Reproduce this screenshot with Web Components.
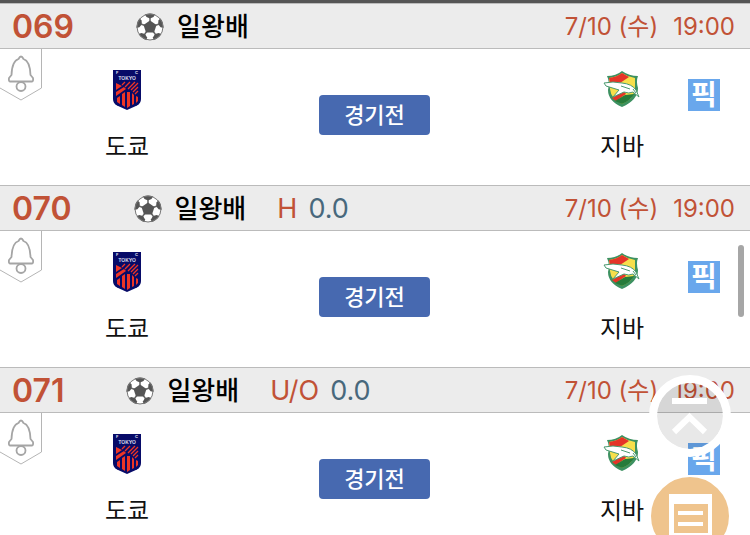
<!DOCTYPE html>
<html lang="ko">
<head>
<meta charset="utf-8">
<meta name="viewport" content="width=device-width, initial-scale=1">
<title>일왕배</title>
<style>
    body {
        margin: 0;
        background: #fff;
        color: #111;
        font-family: Inter, "Noto Sans CJK KR", sans-serif;
        overflow: hidden;
    }
</style>
</head>
<body>
<match-list>
    <match-row number="069" league="일왕배" date="7/10 (수)" time="19:00">
        <team-badge slot="home" crest="tokyo">도쿄</team-badge>
        <team-badge slot="away" crest="chiba">지바</team-badge>
    </match-row>
    <match-row number="070" league="일왕배" type="H" line="0.0" date="7/10 (수)" time="19:00">
        <team-badge slot="home" crest="tokyo">도쿄</team-badge>
        <team-badge slot="away" crest="chiba">지바</team-badge>
    </match-row>
    <match-row number="071" league="일왕배" type="U/O" line="0.0" date="7/10 (수)" time="19:00">
        <team-badge slot="home" crest="tokyo">도쿄</team-badge>
        <team-badge slot="away" crest="chiba">지바</team-badge>
    </match-row>
</match-list>
<scroll-thumb></scroll-thumb>
<floating-actions></floating-actions>

<script>
const crests = {
    tokyo: `
        <svg width="40" height="40" viewBox="0 0 40 40" aria-hidden="true">
            <path d="M6 0H34V29Q34 33 30 35.500L20 40L10 35.500Q6 33 6 29Z" fill="#070b68"/>
            <g fill="#e6e7f5" font-family="Inter, sans-serif" font-weight="600">
                <text x="9" y="4" font-size="4">F</text>
                <text x="28" y="4" font-size="4">C</text>
                <text x="20" y="10" font-size="5" text-anchor="middle">TOKYO</text>
            </g>
            <g fill="#ee3526">
                <path d="M9 13L15 16L9 20Z"/>
                <path d="M9 22L17 17L19 19L9 26Z"/>
                <path d="M10 28L13 26V34L10 32Z"/>
                <path d="M15 24L18 22V37L15 35Z"/>
                <path d="M20 22H23V36L20 38Z"/>
                <path d="M25 23L27 25V34L25 35Z"/>
                <path d="M29 26L31 27V31L29 33Z"/>
            </g>
            <path d="M15 15L18 12M18 17L23 12M21 19L28 12M24 20L31 13M26 22L31 17M28 24L31 21" stroke="#ee3526" stroke-width="1.300"/>
        </svg>`,
    chiba: `
        <svg width="40" height="40" viewBox="0 0 40 40" aria-hidden="true">
            <path d="M5 6Q14 6 20 1Q27 6 36 6Q34 11 36 18Q36 30 20 37Q6 31 6 20Q8 12 5 6Z" fill="#3d9161"/>
            <path d="M7 8Q15 7 20 3Q26 7 33 8V18Q32 29 20 34Q9 29 8 19Z" fill="#f7df4b"/>
            <path d="M7 8Q15 7 20 3L27 7L12 17L8 14Z" fill="#e53428"/>
            <path d="M10 28L22 21L24 24L14 31Z" fill="#e53428"/>
            <path d="M13 31L23 25L32 24Q28 31 20 34Z" fill="#267b3b"/>
            <path d="M2 13Q11 11 20 13Q30 14 34 20L37 27L31 22Q27 24 22 22L11 27L17 20L4 16Z" fill="#fff" stroke="#4a9a70" stroke-width="1"/>
            <path d="M19 16L28 19M31 19L34 23" stroke="#4a9a70" stroke-width="1"/>
        </svg>`
};

class MatchList extends HTMLElement {
    constructor() {
        super();
        this.attachShadow({ mode: 'open' });
        this.shadowRoot.innerHTML = `
        <style>
            :host {
                display: flex;
                flex-direction: column;
                border-top: 3px solid #555;
            }
        </style>
        <slot></slot>`;
    }
}

class TeamBadge extends HTMLElement {
    constructor() {
        super();
        this.attachShadow({ mode: 'open' });
    }

    connectedCallback() {
        this.shadowRoot.innerHTML = `
        <style>
            :host {
                display: flex;
                flex-direction: column;
                align-items: center;
                gap: 21px;
                font-size: 24px;
                line-height: 32px;
            }

            svg {
                display: block;
            }
        </style>
        ${crests[this.getAttribute('crest')]}
        <span><slot></slot></span>`;
    }
}

class SoccerBall extends HTMLElement {
    constructor() {
        super();
        this.attachShadow({ mode: 'open' });
        const spots = [0, 72, 144, 216, 288].map(angle => `
            <g transform="rotate(${angle} 14 14)">
                <path d="M8 0H20L17.500 4L14 5.500L10.500 4Z" fill="#555"/>
                <path d="M14 9V5" stroke="#666" stroke-width="1.500"/>
            </g>`).join('');
        this.shadowRoot.innerHTML = `
        <style>
            :host {
                display: block;
            }

            svg {
                display: block;
            }
        </style>
        <svg width="28" height="28" viewBox="0 0 28 28" aria-hidden="true">
            <defs><clipPath id="ball"><circle cx="14" cy="14" r="13.500"/></clipPath></defs>
            <circle cx="14" cy="14" r="13" fill="#fff"/>
            <g clip-path="url(#ball)">
                ${spots}
                <path d="M14 7.500L20.500 12L18 19.500H10L7.500 12Z" fill="#555"/>
            </g>
            <circle cx="14" cy="14" r="13" fill="none" stroke="#777" stroke-width="1"/>
        </svg>`;
    }
}

class MatchRow extends HTMLElement {
    constructor() {
        super();
        this.attachShadow({ mode: 'open' });
    }

    connectedCallback() {
        const type = this.getAttribute('type');
        this.shadowRoot.innerHTML = `
        <style>
            :host {
                display: block;
            }

            header {
                display: flex;
                align-items: center;
                box-sizing: border-box;
                height: 46px;
                padding: 1px 15px 0 12px;
                background: #ececec;
                border-top: 1px solid #bbb;
                border-bottom: 1px solid #bbb;
                line-height: 44px;
                white-space: nowrap;
            }

            .number {
                color: #c15236;
                font-size: 32px;
                font-weight: 600;
            }

            soccer-ball {
                margin-left: 62px;
            }

            .league {
                margin-left: 13px;
                color: #000;
                font-size: 26px;
                font-weight: 500;
            }

            .type {
                margin-left: 31px;
                color: #c15236;
                font-size: 27px;
            }

            .line {
                margin-left: 11px;
                color: #48687c;
                font-size: 27px;
            }

            .when {
                display: flex;
                gap: 15px;
                margin-left: auto;
                color: #c15236;
                font-size: 24px;
            }

            .body {
                display: grid;
                grid-template-columns: 61px 132px 1fr 132px 62px;
                align-items: start;
                height: 136px;
            }

            ::slotted(team-badge) {
                margin-top: 21px;
            }

            button {
                padding: 0;
                border: 0;
                font-family: inherit;
                cursor: pointer;
            }

            .alarm {
                justify-self: start;
                background: none;
            }

            .alarm svg {
                display: block;
            }

            .state {
                justify-self: center;
                margin-top: 46px;
                padding: 0 25px;
                border-radius: 4px;
                background: #4769b0;
                color: #fff;
                font-size: 22px;
                font-weight: 500;
                line-height: 40px;
            }

            .pick {
                width: 32px;
                margin-top: 30px;
                background: #69a7ec;
                color: #fff;
                font-size: 28px;
                font-weight: 700;
                line-height: 32px;
            }
        </style>
        <header>
            <span class="number">${this.getAttribute('number')}</span>
            <soccer-ball></soccer-ball>
            <span class="league">${this.getAttribute('league')}</span>
            ${type ? `<span class="type">${type}</span><span class="line">${this.getAttribute('line')}</span>` : ''}
            <div class="when"><span>${this.getAttribute('date')}</span><span>${this.getAttribute('time')}</span></div>
        </header>
        <div class="body">
            <button class="alarm" aria-label="알림">
                <svg width="42" height="52" viewBox="0 0 42 52" fill="none">
                    <path d="M41.500 0V39L21 51L0 39" stroke="#b5b5b5"/>
                    <path d="M10 32.500Q8.500 32.500 9 29L11.500 26Q12 12 18.500 10Q21 5 23.500 10Q30 12 30.500 26L33 29Q33.500 32.500 32 32.500Z" stroke="#a5a5a5" stroke-width="1.800" stroke-linejoin="round"/>
                    <circle cx="21" cy="37.500" r="4.500" stroke="#a5a5a5" stroke-width="1.800"/>
                </svg>
            </button>
            <slot name="home"></slot>
            <button class="state">경기전</button>
            <slot name="away"></slot>
            <button class="pick">픽</button>
        </div>`;
    }
}

class ScrollThumb extends HTMLElement {
    constructor() {
        super();
        this.attachShadow({ mode: 'open' });
        this.shadowRoot.innerHTML = `
        <style>
            :host {
                position: fixed;
                top: 245px;
                right: 6px;
                width: 6px;
                height: 72px;
                border-radius: 3px;
                background: #a6a6a6;
            }
        </style>`;
    }
}

class FloatingActions extends HTMLElement {
    constructor() {
        super();
        this.attachShadow({ mode: 'open' });
        this.shadowRoot.innerHTML = `
        <style>
            :host {
                position: fixed;
                right: 19px;
                bottom: -22px;
                display: flex;
                flex-direction: column;
                align-items: center;
                gap: 18px;
            }

            button {
                box-sizing: border-box;
                width: 82px;
                height: 82px;
                padding: 0;
                border-radius: 50%;
                cursor: pointer;
            }

            .top {
                border: 8px solid #fff;
                background: rgba(0, 0, 0, 0.09);
                background-clip: padding-box;
            }

            .slip {
                border: 2px solid #fff;
                background: #efc48d;
            }

            svg {
                display: block;
                margin: auto;
            }
        </style>
        <button class="top" aria-label="맨 위로">
            <svg width="66" height="66" viewBox="0 0 66 66" fill="none" stroke="#fff">
                <path d="M15 18H50" stroke-width="6"/>
                <path d="M17 49L32.500 34L48 49" stroke-width="6"/>
            </svg>
        </button>
        <button class="slip" aria-label="목록">
            <svg width="78" height="78" viewBox="0 0 78 78" fill="#fff">
                <path d="M18 17H61V61H18ZM23 27V56H57V27Z" fill-rule="evenodd"/>
                <path d="M27 34H52V38H27ZM27 45H52V49H27Z"/>
            </svg>
        </button>`;
    }
}

customElements.define('match-list', MatchList);
customElements.define('team-badge', TeamBadge);
customElements.define('soccer-ball', SoccerBall);
customElements.define('match-row', MatchRow);
customElements.define('scroll-thumb', ScrollThumb);
customElements.define('floating-actions', FloatingActions);
</script>
</body>
</html>
